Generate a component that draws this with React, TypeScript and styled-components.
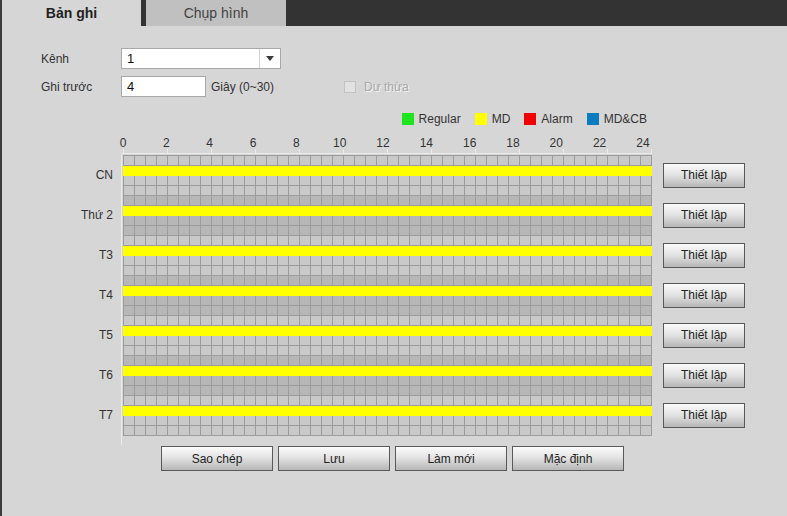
import styled, { createGlobalStyle } from "styled-components";

const GlobalStyle = createGlobalStyle`
  html, body {
    margin: 0;
    padding: 0;
    background: #d6d6d6;
  }
  body {
    font-family: "Liberation Sans", Arial, sans-serif;
    font-size: 12px;
    color: #333;
  }
`;

const Page = styled.div`
  width: 785px;
  min-height: 516px;
  display: flex;
  flex-direction: column;
  border-left: 2px solid #3c3c3c;
  background: #d6d6d6;
`;

const TabBar = styled.nav`
  display: flex;
  gap: 5px;
  height: 26px;
  flex-shrink: 0;
  background: #333;
`;

const Tab = styled.div<{ $active?: boolean }>`
  width: ${(p) => (p.$active ? 139 : 140)}px;
  display: flex;
  align-items: center;
  justify-content: center;
  font-size: 14px;
  font-weight: ${(p) => (p.$active ? 700 : 400)};
  color: ${(p) => (p.$active ? "#222" : "#444")};
  background: ${(p) => (p.$active ? "#d6d6d6" : "#c0c0c0")};
`;

const Content = styled.main`
  flex: 1;
  padding: 22px 0 0 39px;
`;

const FormRow = styled.div`
  display: flex;
  align-items: center;
  height: 21px;

  & + & {
    margin-top: 7px;
  }
`;

const FieldLabel = styled.label`
  width: 80px;
  color: #333;
`;

const Select = styled.div`
  width: 160px;
  height: 21px;
  box-sizing: border-box;
  display: flex;
  align-items: center;
  border: 1px solid #a9a9a9;
  background: #fff;
`;

const SelectValue = styled.span`
  flex: 1;
  padding-left: 5px;
  font-size: 13px;
  color: #111;
`;

const SelectArrow = styled.span`
  width: 20px;
  height: 100%;
  display: flex;
  align-items: center;
  justify-content: center;
  border-left: 1px solid #d4d4d4;
`;

const TextInput = styled.input`
  width: 85px;
  height: 21px;
  box-sizing: border-box;
  margin: 0;
  padding: 0 5px;
  border: 1px solid #a9a9a9;
  background: #fff;
  font: 13px "Liberation Sans", Arial, sans-serif;
  color: #111;
  outline: none;
`;

const Unit = styled.span`
  width: 133px;
  margin-left: 5px;
  color: #333;
`;

const DisabledCheck = styled.span`
  width: 12px;
  height: 12px;
  box-sizing: border-box;
  margin-right: 8px;
  border: 1px solid #c2c2c2;
  background: #e2e2e2;
`;

const DisabledText = styled.span`
  color: #a8a8a8;
  text-shadow: 1px 1px 0 #f4f4f4;
`;

const Legend = styled.div`
  width: 606px;
  margin-top: 16px;
  display: flex;
  justify-content: flex-end;
  gap: 14px;
`;

const LegendItem = styled.span`
  display: flex;
  align-items: center;
  gap: 5px;
  height: 12px;
  color: #333;
`;

const Swatch = styled.span<{ $color: string }>`
  width: 12px;
  height: 12px;
  background: ${(p) => p.$color};
`;

const AxisRow = styled.div`
  display: flex;
  margin-left: 80px;
`;

const Axis = styled.div`
  width: 531px;
  height: 28px;
  margin-bottom: 1px;
  border-bottom: 1px solid #ececec;
  background: linear-gradient(to right, #ececec 1px, transparent 1px) 2px
    bottom / 44px 4px repeat-x;
`;

const HourLabels = styled.div`
  display: flex;
  margin-left: -19.67px;
  padding-top: 11px;
`;

const HourLabel = styled.span`
  width: 43.33px;
  flex-shrink: 0;
  text-align: center;
  line-height: 14px;
  color: #333;
`;

const Schedule = styled.div`
  display: flex;
  align-items: flex-start;
`;

const DayLabels = styled.div`
  width: 72px;
  margin-right: 8px;
  display: flex;
  flex-direction: column;
`;

const DayLabel = styled.div`
  height: 40px;
  line-height: 41px;
  text-align: right;
  color: #333;
`;

const Track = styled.div`
  border-left: 1px solid #ececec;
  padding: 0 0 9px 1px;
`;

const DayStrip = styled.div<{ $dark?: boolean; $last?: boolean }>`
  width: 528px;
  height: 40px;
  border-right: 1px solid #9c9c9c;
  border-bottom: ${(p) => (p.$last ? "1px solid #9c9c9c" : "none")};
  background:
    linear-gradient(to right, #9c9c9c 1px, transparent 1px) 0 0 / 11px 100%,
    linear-gradient(to bottom, #9c9c9c 1px, transparent 1px) 0 0 / 100% 10px,
    ${(p) => (p.$dark ? "#b7b7b7" : "#c9c9c9")};
  display: flow-root;
`;

const RecordBar = styled.div<{ $color: string }>`
  height: 10px;
  margin-top: 11px;
  background: ${(p) => p.$color};
`;

const SetupColumn = styled.div`
  margin-left: 11px;
  display: flex;
  flex-direction: column;
`;

const SetupCell = styled.div`
  height: 40px;
  display: flex;
  align-items: center;
`;

const GrayButton = styled.button<{ $width: number }>`
  width: ${(p) => p.$width}px;
  height: 25px;
  margin: 0;
  padding: 0;
  border: 1px solid #595959;
  background: linear-gradient(#fbfbfb, #e4e4e4 45%, #b6b6b6);
  font: 12px "Liberation Sans", Arial, sans-serif;
  color: #222;
`;

const Actions = styled.div`
  display: flex;
  gap: 5px;
  margin: 1px 0 0 120px;
`;

const legend = [
  { name: "Regular", color: "#1ee51e" },
  { name: "MD", color: "#ffff00" },
  { name: "Alarm", color: "#f20000" },
  { name: "MD&CB", color: "#0a7cc0" },
];

const days = ["CN", "Thứ 2", "T3", "T4", "T5", "T6", "T7"];

// each day records MD for the whole 24h
const segments: { start: number; end: number }[] = [{ start: 0, end: 24 }];

const hours = Array.from({ length: 13 }, (_, i) => i * 2);

const App: React.FC = () => {
  return (
    <Page>
      <GlobalStyle />
      <TabBar>
        <Tab $active>Bản ghi</Tab>
        <Tab>Chụp hình</Tab>
      </TabBar>
      <Content>
        <FormRow>
          <FieldLabel>Kênh</FieldLabel>
          <Select>
            <SelectValue>1</SelectValue>
            <SelectArrow>
              <svg width="8" height="5" viewBox="0 0 8 5">
                <path d="M0 0h8L4 5z" fill="#3a3a3a" />
              </svg>
            </SelectArrow>
          </Select>
        </FormRow>
        <FormRow>
          <FieldLabel>Ghi trước</FieldLabel>
          <TextInput defaultValue="4" />
          <Unit>Giây (0~30)</Unit>
          <DisabledCheck />
          <DisabledText>Dư thừa</DisabledText>
        </FormRow>

        <Legend>
          {legend.map((l) => (
            <LegendItem key={l.name}>
              <Swatch $color={l.color} />
              {l.name}
            </LegendItem>
          ))}
        </Legend>

        <AxisRow>
          <Axis>
            <HourLabels>
              {hours.map((h) => (
                <HourLabel key={h}>{h}</HourLabel>
              ))}
            </HourLabels>
          </Axis>
        </AxisRow>

        <Schedule>
          <DayLabels>
            {days.map((d) => (
              <DayLabel key={d}>{d}</DayLabel>
            ))}
          </DayLabels>
          <Track>
            {days.map((d, i) => (
              <DayStrip key={d} $dark={i % 2 === 1} $last={i === days.length - 1}>
                {segments.map((s) => (
                  <RecordBar
                    key={s.start}
                    $color="#ffff00"
                    style={{
                      marginLeft: `${(s.start / 24) * 528}px`,
                      width: `${((s.end - s.start) / 24) * 528 + 1}px`,
                    }}
                  />
                ))}
              </DayStrip>
            ))}
          </Track>
          <SetupColumn>
            {days.map((d) => (
              <SetupCell key={d}>
                <GrayButton $width={82}>Thiết lập</GrayButton>
              </SetupCell>
            ))}
          </SetupColumn>
        </Schedule>

        <Actions>
          <GrayButton $width={112}>Sao chép</GrayButton>
          <GrayButton $width={112}>Lưu</GrayButton>
          <GrayButton $width={112}>Làm mới</GrayButton>
          <GrayButton $width={112}>Mặc định</GrayButton>
        </Actions>
      </Content>
    </Page>
  );
};

export default App;
